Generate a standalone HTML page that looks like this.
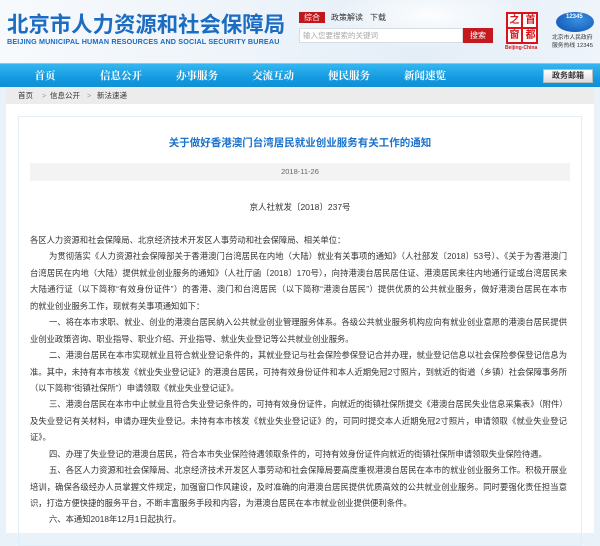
<!DOCTYPE html>
<html><head><meta charset="utf-8"><style>
*{margin:0;padding:0;box-sizing:border-box}
body{width:600px;height:533px;overflow:hidden;background:#e9f2f9;font-family:"Liberation Sans","Noto Sans CJK SC",sans-serif;position:relative;color:#333}
.hdr{position:absolute;left:0;top:0;width:600px;height:63px;background:linear-gradient(90deg,#f7fafd 0%,#eef4fa 40%,#e4eef7 70%,#eef4fa 100%)}
.hdr:after{content:"";position:absolute;left:330px;top:-20px;width:200px;height:70px;background:radial-gradient(ellipse at center,rgba(255,255,255,.9),rgba(255,255,255,0) 70%)}
.abs{position:absolute;white-space:nowrap}
.logo{left:7px;top:11px;font-size:21.4px;font-weight:bold;color:#1b6cc2;letter-spacing:0;line-height:26px;font-family:"Noto Sans CJK SC",sans-serif}
.en{left:7px;top:37px;font-size:7.2px;font-weight:bold;color:#1b6cc2;letter-spacing:.15px}
.tab{top:12px;height:11px;font-size:8px;line-height:11px;color:#333;z-index:2}
.nav{position:absolute;left:0;top:63px;width:600px;height:24px;background:linear-gradient(#35b6f0,#139ae0 60%,#0f8fd6);border-top:1px solid #6fd0f7}
.nav span{position:absolute;top:0;line-height:23px;font-size:10.5px;color:#fff;transform:translateX(-50%);font-weight:bold;font-family:"Noto Serif CJK SC",serif}
.mail{position:absolute;left:543px;top:5px;width:50px;height:14px;background:linear-gradient(#fff,#dcdcdc);border:1px solid #bbb;font-size:8px;line-height:12px;text-align:center;color:#333;font-weight:bold}
.wrap{position:absolute;left:6px;top:87px;width:588px;height:446px;background:#fff}
.bc{position:absolute;left:0;top:0;width:588px;height:17px;background:#ececec;font-size:7.5px;line-height:17px;color:#333}
.box{position:absolute;left:12px;top:29px;width:564px;height:430px;border:1px solid #e1eef8}
.title{position:absolute;left:0;top:136px;width:600px;text-align:center;font-size:10.5px;font-weight:bold;color:#1b72cc;line-height:14px}
.date{position:absolute;left:30px;top:163px;width:540px;height:18px;background:#f3f3f3;text-align:center;font-size:7.5px;line-height:18px;color:#666}
.no{position:absolute;left:0;top:201px;width:600px;text-align:center;font-size:8.5px;line-height:12px;color:#333}
.body{position:absolute;left:30px;top:232px;width:537px;font-size:8.3px;line-height:16.45px;color:#333}
.body div{white-space:nowrap;height:16.45px}
.j{text-align:justify;text-align-last:justify;white-space:normal!important;overflow:hidden}
.i{padding-left:19px}
.rl{position:absolute;width:15px;height:15px;font-size:10px;line-height:15px;text-align:center;color:#d7141a;font-weight:bold}
</style></head><body>
<div class="hdr"></div>
<div class="abs logo">北京市人力资源和社会保障局</div>
<div class="abs en">BEIJING MUNICIPAL HUMAN RESOURCES AND SOCIAL SECURITY BUREAU</div>
<div class="abs tab" style="left:299px;width:26px;background:#c0161c;color:#fff;text-align:center">综合</div>
<div class="abs tab" style="left:331px">政策解读</div>
<div class="abs tab" style="left:370px">下载</div>
<div class="abs" style="left:299px;top:28px;width:164px;height:15px;background:#fff;border:1px solid #d6dde4;font-size:7.5px;line-height:13px;color:#aaa;padding-left:3px;z-index:2">输入您要搜索的关键词</div>
<div class="abs" style="left:463px;top:28px;width:30px;height:15px;background:#c41a1f;color:#fff;font-size:8px;line-height:15px;text-align:center;z-index:2">搜索</div>
<div class="abs" style="left:506px;top:12px;width:32px;height:38px;z-index:2">
<div style="position:absolute;left:0;top:0;width:32px;height:32px;border:2px solid #d7141a;background:#fff"></div>
<div style="position:absolute;left:15px;top:1px;width:2px;height:30px;background:#d7141a"></div>
<div style="position:absolute;left:1px;top:15px;width:30px;height:2px;background:#d7141a"></div>
<div class="rl" style="left:1px;top:1px">之</div>
<div class="rl" style="left:17px;top:1px">首</div>
<div class="rl" style="left:1px;top:16px">窗</div>
<div class="rl" style="left:17px;top:16px">都</div>
<div style="position:absolute;left:-1px;top:33px;font-size:5px;color:#d7141a;font-weight:bold">Beijing-China</div>
</div>
<div class="abs" style="left:556px;top:12px;width:38px;height:20px;border-radius:50%;background:radial-gradient(ellipse at 60% 40%,#3a8fe0,#0b4fb0);z-index:2"></div>
<div class="abs" style="left:566px;top:14px;font-size:6px;color:#fff;font-weight:bold;z-index:3">12345</div>
<div class="abs" style="left:552px;top:35px;font-size:5.8px;line-height:7.5px;color:#333;z-index:2">北京市人民政府<br>服务热线 12345</div>
<div class="nav">
<span style="left:45px">首页</span><span style="left:121px">信息公开</span><span style="left:197px">办事服务</span><span style="left:273px">交流互动</span><span style="left:349px">便民服务</span><span style="left:425px">新闻速览</span>
<div class="mail">政务邮箱</div>
</div>
<div class="wrap">
<div class="bc"><span style="position:absolute;left:12px">首页</span><span style="position:absolute;left:36px;color:#999">&gt;</span><span style="position:absolute;left:44px">信息公开</span><span style="position:absolute;left:81px;color:#999">&gt;</span><span style="position:absolute;left:91px">新法速递</span></div>
<div class="box"></div>
</div>
<div class="title">关于做好香港澳门台湾居民就业创业服务有关工作的通知</div>
<div class="date">2018-11-26</div>
<div class="no">京人社就发〔2018〕237号</div>
<div class="body">
<div>各区人力资源和社会保障局、北京经济技术开发区人事劳动和社会保障局、相关单位：</div>
<div class="j i">为贯彻落实《人力资源社会保障部关于香港澳门台湾居民在内地（大陆）就业有关事项的通知》（人社部发〔2018〕53号）、《关于为香港澳门</div>
<div class="j">台湾居民在内地（大陆）提供就业创业服务的通知》（人社厅函〔2018〕170号），向持港澳台居民居住证、港澳居民来往内地通行证或台湾居民来往</div>
<div class="j">大陆通行证（以下简称“有效身份证件”）的香港、澳门和台湾居民（以下简称“港澳台居民”）提供优质的公共就业服务，做好港澳台居民在本市</div>
<div>的就业创业服务工作，现就有关事项通知如下：</div>
<div class="j i">一、将在本市求职、就业、创业的港澳台居民纳入公共就业创业管理服务体系。各级公共就业服务机构应向有就业创业意愿的港澳台居民提供就</div>
<div>业创业政策咨询、职业指导、职业介绍、开业指导、就业失业登记等公共就业创业服务。</div>
<div class="j i">二、港澳台居民在本市实现就业且符合就业登记条件的，其就业登记与社会保险参保登记合并办理，就业登记信息以社会保险参保登记信息为</div>
<div class="j">准。其中，未持有本市核发《就业失业登记证》的港澳台居民，可持有效身份证件和本人近期免冠2寸照片，到就近的街道（乡镇）社会保障事务所</div>
<div>（以下简称“街镇社保所”）申请领取《就业失业登记证》。</div>
<div class="j i">三、港澳台居民在本市中止就业且符合失业登记条件的，可持有效身份证件，向就近的街镇社保所提交《港澳台居民失业信息采集表》（附件）</div>
<div class="j">及失业登记有关材料，申请办理失业登记。未持有本市核发《就业失业登记证》的，可同时提交本人近期免冠2寸照片，申请领取《就业失业登记</div>
<div>证》。</div>
<div class="i">四、办理了失业登记的港澳台居民，符合本市失业保险待遇领取条件的，可持有效身份证件向就近的街镇社保所申请领取失业保险待遇。</div>
<div class="j i">五、各区人力资源和社会保障局、北京经济技术开发区人事劳动和社会保障局要高度重视港澳台居民在本市的就业创业服务工作。积极开展业务</div>
<div class="j">培训，确保各级经办人员掌握文件规定，加强窗口作风建设，及时准确的向港澳台居民提供优质高效的公共就业创业服务。同时要强化责任担当意</div>
<div>识，打造方便快捷的服务平台，不断丰富服务手段和内容，为港澳台居民在本市就业创业提供便利条件。</div>
<div class="i">六、本通知2018年12月1日起执行。</div>
</div>
</body></html>
